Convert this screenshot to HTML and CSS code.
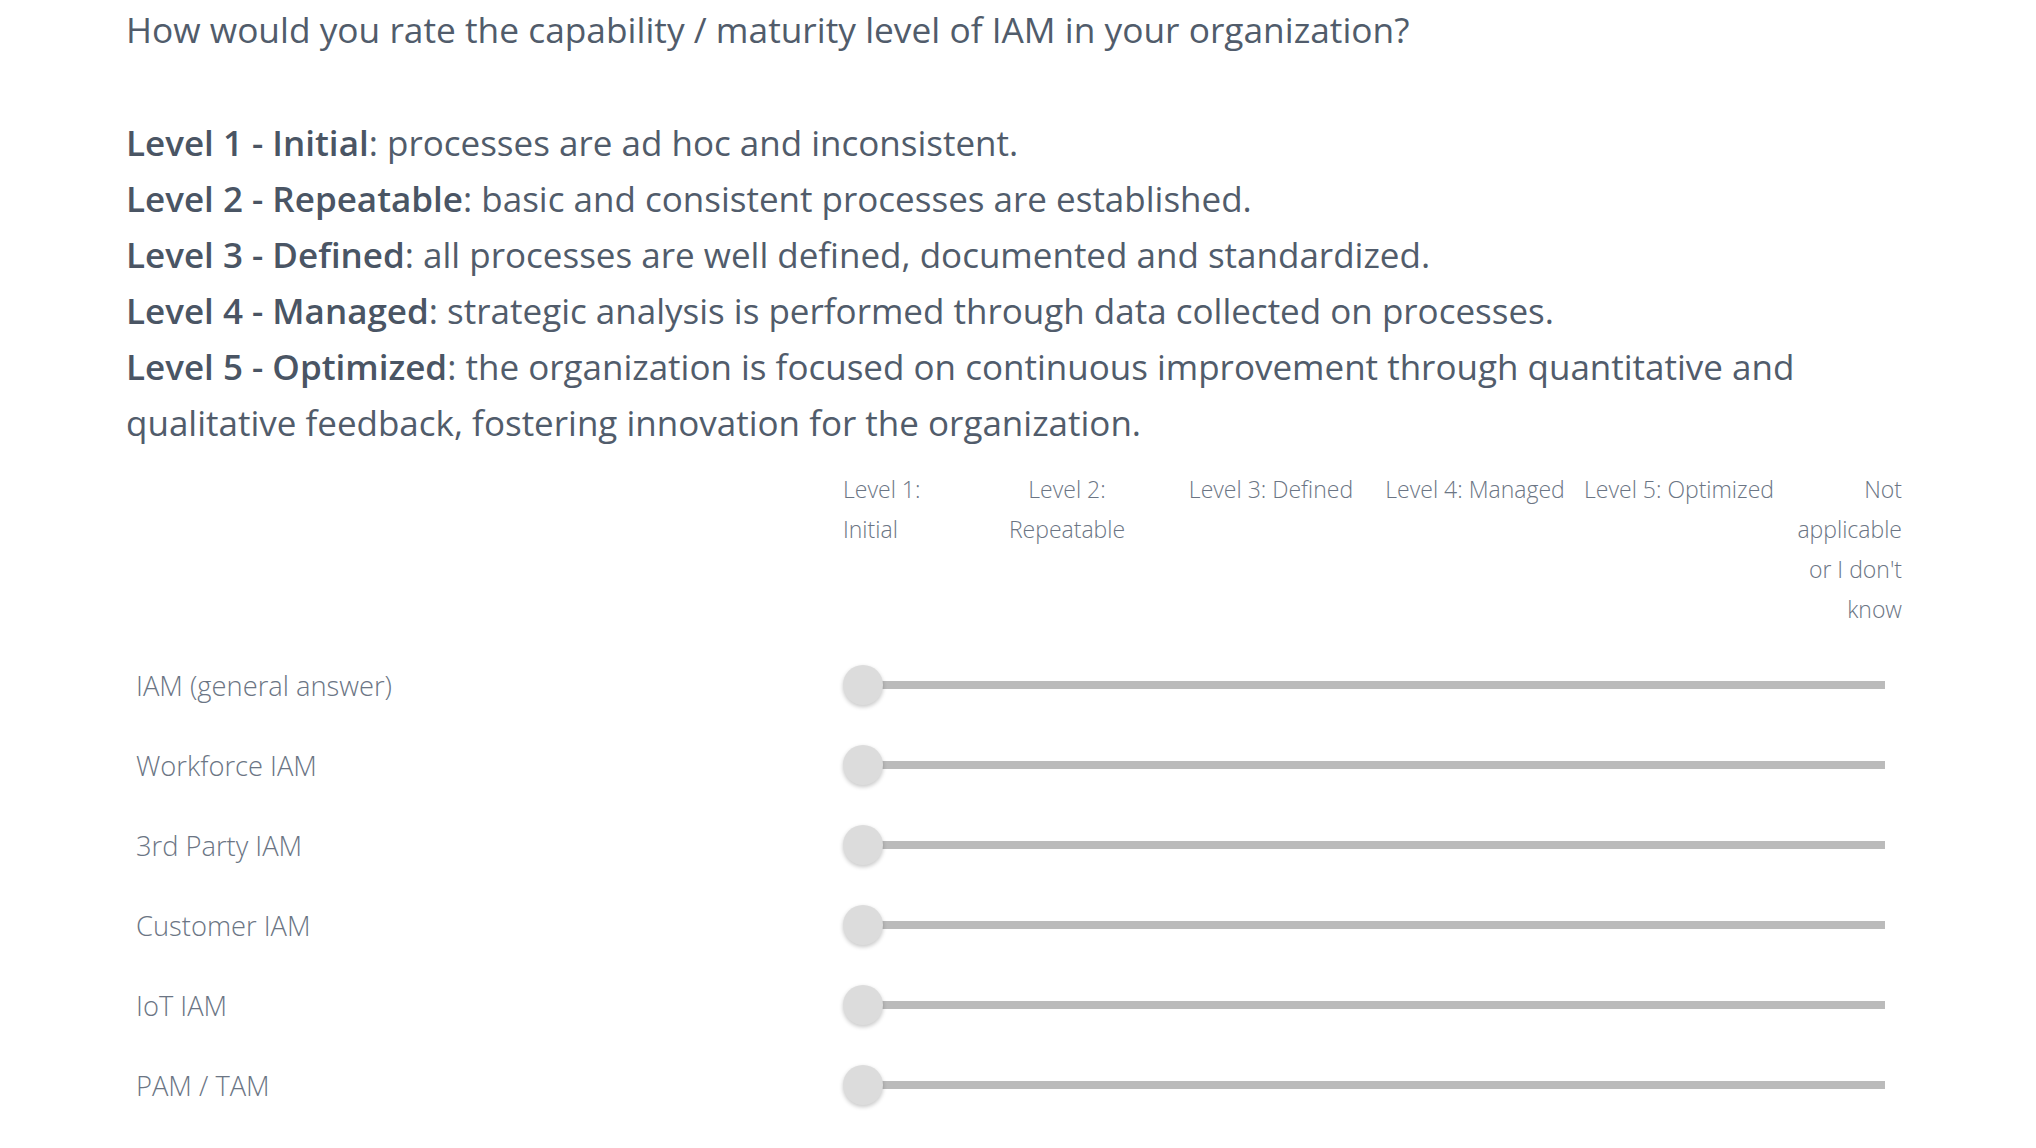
FILE: index.html
```html
<!DOCTYPE html>
<html lang="en">
<head>
<meta charset="utf-8">
<title>IAM maturity</title>
<link rel="stylesheet" href="styles.css">
</head>
<body>
<div class="question">
  <div class="question-text">
    <p class="title">How would you rate the capability / maturity level of IAM in your organization?</p>
    <div class="levels">
      <div class="level"><strong>Level 1 - Initial</strong>: processes are ad hoc and inconsistent.</div>
      <div class="level"><strong>Level 2 - Repeatable</strong>: basic and consistent processes are established.</div>
      <div class="level"><strong>Level 3 - Defined</strong>: all processes are well defined, documented and standardized.</div>
      <div class="level"><strong>Level 4 - Managed</strong>: strategic analysis is performed through data collected on processes.</div>
      <div class="level"><strong>Level 5 - Optimized</strong>: the organization is focused on continuous improvement through quantitative and qualitative feedback, fostering innovation for the organization.</div>
    </div>
  </div>
  <div class="scale-head">
    <div class="scale-spacer"></div>
    <div class="scale-labels">
      <span class="lab lab-first">Level 1: Initial</span>
      <span class="lab">Level 2:<br>Repeatable</span>
      <span class="lab">Level 3: Defined</span>
      <span class="lab">Level 4: Managed</span>
      <span class="lab">Level 5: Optimized</span>
      <span class="lab lab-last">Not applicable or I don't know</span>
    </div>
  </div>
  <div class="rows">
    <div class="row"><div class="row-label">IAM (general answer)</div><div class="slider"><div class="track"></div><div class="knob"></div></div></div>
    <div class="row"><div class="row-label">Workforce IAM</div><div class="slider"><div class="track"></div><div class="knob"></div></div></div>
    <div class="row"><div class="row-label">3rd Party IAM</div><div class="slider"><div class="track"></div><div class="knob"></div></div></div>
    <div class="row"><div class="row-label">Customer IAM</div><div class="slider"><div class="track"></div><div class="knob"></div></div></div>
    <div class="row"><div class="row-label">IoT IAM</div><div class="slider"><div class="track"></div><div class="knob"></div></div></div>
    <div class="row"><div class="row-label">PAM / TAM</div><div class="slider"><div class="track"></div><div class="knob"></div></div></div>
  </div>
</div>
</body>
</html>
```
FILE: styles.css
```css
html, body {
  margin: 0;
  padding: 0;
  background: #ffffff;
}
body {
  font-family: "Open Sans", "Noto Sans", sans-serif;
  color: #515c6b;
  overflow: hidden;
}
.question {
  padding: 3px 0 0 126px;
  width: 1790px;
}
.question-text {
  font-size: 35px;
  line-height: 56px;
}
.question-text p {
  margin: 0;
}
.title {
  font-size: 35.3px;
  line-height: 53px;
  margin-bottom: 59px !important;
}
.levels strong {
  font-weight: 600;
  color: #4a5564;
}
.levels {
  width: 1680px;
}
.scale-head {
  display: flex;
  margin-top: 18px;
}
.scale-spacer {
  width: 717px;
  flex: none;
}
.scale-labels {
  display: grid;
  grid-template-columns: 122px 204px 204px 204px 204px 121px;
  font-size: 23px;
  line-height: 40px;
  font-weight: 300;
  color: #6b7584;
}
.lab {
  text-align: center;
  white-space: nowrap;
}
.lab-first {
  text-align: left;
  white-space: normal;
}
.lab-last {
  text-align: right;
  white-space: normal;
}
.rows {
  margin-top: 16px;
}
.row {
  display: flex;
  align-items: center;
  height: 80px;
}
.row-label {
  width: 707px;
  padding-left: 10px;
  flex: none;
  font-size: 27.3px;
  font-weight: 300;
  color: #6b7584;
}
.slider {
  position: relative;
  width: 1042px;
  height: 40px;
}
.track {
  position: absolute;
  left: 20px;
  right: 0;
  top: 16px;
  height: 8px;
  background: #bbbbbb;
}
.knob {
  position: absolute;
  left: 0;
  top: 0;
  width: 40px;
  height: 40px;
  border-radius: 50%;
  background: #dcdcdc;
  box-shadow: 0 2px 4px rgba(0, 0, 0, 0.22);
}
```
